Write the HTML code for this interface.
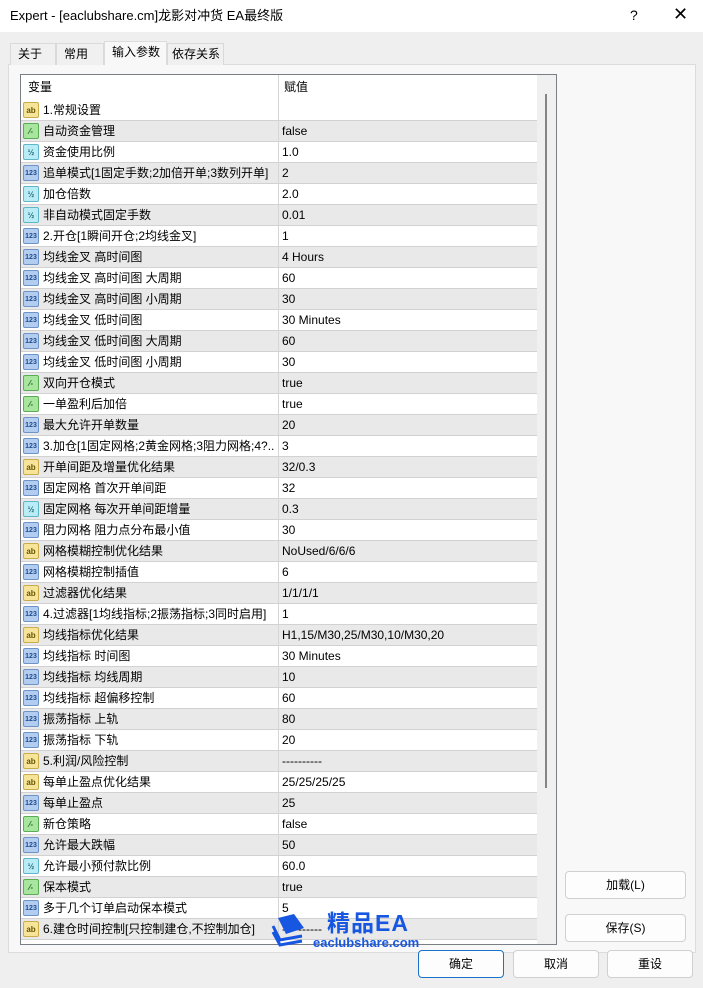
<!DOCTYPE html>
<html><head><meta charset="utf-8"><style>
*{margin:0;padding:0;box-sizing:border-box}
body{width:703px;height:988px;background:#efefef;font-family:"Liberation Sans","Noto Sans CJK SC",sans-serif;font-size:12px;color:#000;position:relative;overflow:hidden}
.title{position:absolute;left:0;top:0;width:703px;height:32px;background:#fff;font-size:13px}
.title .t{position:absolute;left:10px;top:0;line-height:32px}
.tab{position:absolute;top:43px;height:22px;border:1px solid #d9d9d9;border-bottom:none;background:#f0f0f0;font-size:12px;padding-left:7px;line-height:21px}
.page{position:absolute;left:8px;top:64px;width:688px;height:889px;background:#f8f8f8;border:1px solid #dcdcdc}
.list{position:absolute;left:20px;top:74px;width:537px;height:871px;background:#fff;border:1px solid #7a7f86;overflow:hidden}
.hdr{position:absolute;left:0;top:0;height:25px;width:516px;line-height:25px}
.row{position:absolute;left:0;width:516px;height:21px;border-bottom:1px solid #d2d2d2;line-height:20px}
.row.g{background:#e9e9e9}
.row .n{position:absolute;left:22px;top:0;white-space:nowrap}
.row .v{position:absolute;left:261px;top:0;white-space:nowrap}
.col{position:absolute;left:257px;top:0;width:1px;height:871px;background:#d6d6d6}
.ic{position:absolute;left:2px;top:2px;width:16px;height:16px;border-radius:2px;font-size:8px;font-weight:bold;text-align:center;line-height:15px}
.ab{background:#f5e49a;border:1px solid #c9ad4a;color:#6b5500}
.bo{background:#a8e6a0;border:1px solid #5aad52;color:#1c6a14}
.hf{background:#b9ecf5;border:1px solid #5fb6c8;color:#1f6c80}
.nu{background:#b3cdf0;border:1px solid #6d93c9;color:#1c4b8e;font-size:7px}
.sb{position:absolute;left:516px;top:0;width:19px;height:871px;background:#f0f0f0}
.th{position:absolute;left:524px;top:19px;width:2px;height:694px;background:#858585}
.btn{position:absolute;height:28px;background:#fdfdfd;border:1px solid #d0d0d0;border-radius:4px;text-align:center;line-height:26px;font-size:12px}
</style></head><body>
<div class="title"><span class="t">Expert - [eaclubshare.cm]龙影对冲货 EA最终版</span>
<span style="position:absolute;left:630px;top:7px;font-size:14px">?</span>
<span style="position:absolute;left:673px;top:4px;font-size:18px">✕</span></div>
<div class="page"></div>
<div class="tab" style="left:10px;width:46px">关于</div>
<div class="tab" style="left:56px;width:48px">常用</div>
<div class="tab" style="left:104px;top:41px;height:24px;width:63px;background:#f8f8f8;border-color:#dcdcdc">输入参数</div>
<div class="tab" style="left:167px;width:57px;padding-left:4px">依存关系</div>
<div class="list">
<div class="hdr"><span style="position:absolute;left:7px;top:0">变量</span><span style="position:absolute;left:263px;top:0">赋值</span></div>
<div id="rows"></div>
<div class="col"></div>
<div class="sb"></div><div class="th"></div>
</div>
<div class="btn" style="left:565px;top:871px;width:121px">加载(L)</div>
<div class="btn" style="left:565px;top:914px;width:121px">保存(S)</div>
<div class="btn" style="left:418px;top:950px;width:86px;border-color:#1a73c9">确定</div>
<div class="btn" style="left:513px;top:950px;width:86px">取消</div>
<div class="btn" style="left:607px;top:950px;width:86px">重设</div>
<svg style="position:absolute;left:270px;top:912px" width="40" height="36"><path d="M8 6 L24 2 L34 16 L16 22 Z" fill="#1656e0"/><path d="M3 14 L10 28 L32 24" stroke="#1656e0" stroke-width="3" fill="none"/><path d="M3 20 L10 33 L32 29" stroke="#1656e0" stroke-width="3" fill="none"/></svg>
<div style="position:absolute;left:327px;top:909px;font-size:23px;font-weight:bold;color:#1656e0;letter-spacing:1px;line-height:28px">精品EA</div>
<div style="position:absolute;left:313px;top:935px;font-size:13px;font-weight:bold;color:#1656e0;line-height:16px">eaclubshare.com</div>
<script>
var d=[["ab","1.常规设置",""],["bo","自动资金管理","false"],["hf","资金使用比例","1.0"],["nu","追单模式[1固定手数;2加倍开单;3数列开单]","2"],["hf","加仓倍数","2.0"],["hf","非自动模式固定手数","0.01"],["nu","2.开仓[1瞬间开仓;2均线金叉]","1"],["nu","均线金叉 高时间图","4 Hours"],["nu","均线金叉 高时间图 大周期","60"],["nu","均线金叉 高时间图 小周期","30"],["nu","均线金叉 低时间图","30 Minutes"],["nu","均线金叉 低时间图 大周期","60"],["nu","均线金叉 低时间图 小周期","30"],["bo","双向开仓模式","true"],["bo","一单盈利后加倍","true"],["nu","最大允许开单数量","20"],["nu","3.加仓[1固定网格;2黄金网格;3阻力网格;4?..","3"],["ab","开单间距及增量优化结果","32/0.3"],["nu","固定网格 首次开单间距","32"],["hf","固定网格 每次开单间距增量","0.3"],["nu","阻力网格 阻力点分布最小值","30"],["ab","网格模糊控制优化结果","NoUsed/6/6/6"],["nu","网格模糊控制插值","6"],["ab","过滤器优化结果","1/1/1/1"],["nu","4.过滤器[1均线指标;2振荡指标;3同时启用]","1"],["ab","均线指标优化结果","H1,15/M30,25/M30,10/M30,20"],["nu","均线指标 时间图","30 Minutes"],["nu","均线指标 均线周期","10"],["nu","均线指标 超偏移控制","60"],["nu","振荡指标 上轨","80"],["nu","振荡指标 下轨","20"],["ab","5.利润/风险控制","----------"],["ab","每单止盈点优化结果","25/25/25/25"],["nu","每单止盈点","25"],["bo","新仓策略","false"],["nu","允许最大跌幅","50"],["hf","允许最小预付款比例","60.0"],["bo","保本模式","true"],["nu","多于几个订单启动保本模式","5"],["ab","6.建仓时间控制[只控制建仓,不控制加仓]","----------"]];
var L={ab:"ab",bo:"⁄‐",hf:"½",nu:"123"};var h="";
d.forEach(function(r,i){h+='<div class="row'+(i%2?' g':'')+'" style="top:'+(25+i*21)+'px"><div class="ic '+r[0]+'">'+L[r[0]]+'</div><span class="n">'+r[1]+'</span><span class="v">'+r[2]+'</span></div>';});
document.getElementById("rows").innerHTML=h;
</script>
</body></html>
